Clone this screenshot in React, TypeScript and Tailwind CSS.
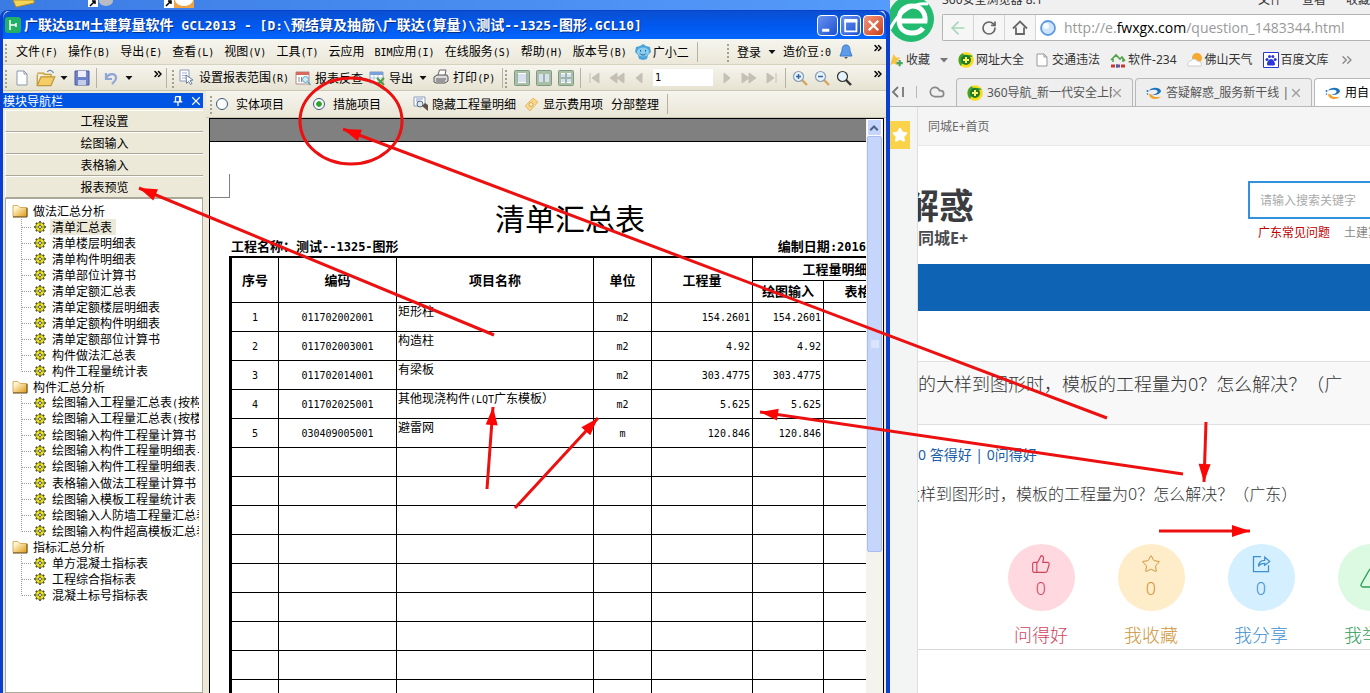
import type { ReactNode } from 'react'
import { ArrowLeft, ChevronsRight, Cloud, House, RotateCw, Star, ThumbsUp, Triangle } from 'lucide-react'

const menus = ['文件(F)', '操作(B)', '导出(E)', '查看(L)', '视图(V)', '工具(T)', '云应用', 'BIM应用(I)', '在线服务(S)', '帮助(H)', '版本号(B)']

const modules = ['工程设置', '绘图输入', '表格输入', '报表预览']

const tree = [
  {
    name: '做法汇总分析',
    items: ['清单汇总表', '清单楼层明细表', '清单构件明细表', '清单部位计算书', '清单定额汇总表', '清单定额楼层明细表', '清单定额构件明细表', '清单定额部位计算书', '构件做法汇总表', '构件工程量统计表'],
  },
  {
    name: '构件汇总分析',
    items: ['绘图输入工程量汇总表(按构', '绘图输入工程量汇总表(按楼', '绘图输入构件工程量计算书', '绘图输入构件工程量明细表-', '绘图输入构件工程量明细表.', '表格输入做法工程量计算书', '绘图输入模板工程量统计表', '绘图输入人防墙工程量汇总表', '绘图输入构件超高模板汇总表'],
  },
  { name: '指标汇总分析', items: ['单方混凝土指标表', '工程综合指标表', '混凝土标号指标表'] },
]

const rows = [
  ['1', '011702002001', '矩形柱', 'm2', '154.2601'],
  ['2', '011702003001', '构造柱', 'm2', '4.92'],
  ['3', '011702014001', '有梁板', 'm2', '303.4775'],
  ['4', '011702025001', '其他现浇构件(LQT广东模板）', 'm2', '5.625'],
  ['5', '030409005001', '避雷网', 'm', '120.846'],
  ...Array.from({ length: 9 }, () => ['', '', '', '', '']),
]

const arrows = [
  [1107, 418, 343, 129],
  [494, 335, 139, 188],
  [515, 508, 598, 418],
  [487, 489, 493, 407],
  [1183, 474, 760, 412],
  [1206, 422, 1204, 482],
  [1159, 531, 1250, 531],
]

// latin runs are set in a half-width mono face next to full-width hanzi
function Song({ text, latin = 'text-[10px]' }: { text: string; latin?: string }) {
  return (
    <>
      {text.split(/([\x20-\x7e]+)/).map((part, i) =>
        i % 2 ? <span key={i} className={`font-['DejaVu_Sans_Mono',monospace] whitespace-pre ${latin}`}>{part}</span> : part,
      )}
    </>
  )
}

function Icon({ children, className = 'size-4' }: { children: ReactNode; className?: string }) {
  return <svg viewBox="0 0 16 16" fill="none" className={`shrink-0 ${className}`}>{children}</svg>
}

function Grip() {
  return (
    <svg className="h-5 w-1 shrink-0" viewBox="0 0 4 20">
      <path d="M2 2v18" stroke="#a5a18f" strokeWidth="2" strokeDasharray="2 2" />
    </svg>
  )
}

function Sep() {
  return <span className="h-5 w-px shrink-0 bg-[#b5b2a0]" />
}

function Caret() {
  return <Icon className="size-2"><path d="M1 4h14l-7 8z" fill="#111" /></Icon>
}

function More() {
  return <ChevronsRight className="size-3 shrink-0" strokeWidth={3} />
}

function Tool({ label, children, gap = 'gap-1' }: { label?: string; children?: ReactNode; gap?: string }) {
  return (
    <button className={`flex shrink-0 items-center ${gap} whitespace-nowrap`}>
      {children}
      {label && <span><Song text={label} /></span>}
    </button>
  )
}

function Lens({ sign }: { sign?: string }) {
  return (
    <Icon>
      <path d="M10 10l5 5" stroke={sign ? '#d9a55a' : '#333'} strokeWidth="2.4" />
      <circle cx="6.5" cy="6.5" r="5" fill="#e6f3fb" stroke={sign ? '#8d9db0' : '#333'} strokeWidth="1.2" />
      {sign && <path d={sign} stroke="#3465a4" strokeWidth="1.5" />}
    </Icon>
  )
}

function Folder() {
  return (
    <Icon>
      <defs>
        <linearGradient id="folder" x1="0" y1="0" x2="1" y2="1">
          <stop offset=".2" stopColor="#fff6cf" />
          <stop offset=".9" stopColor="#e3a32a" />
        </linearGradient>
      </defs>
      <path d="M1 2.500h5l2 2h7v9H1z" fill="url(#folder)" stroke="#c9a04a" strokeWidth=".8" />
      <path d="M15 5v9H1" stroke="#5f4510" />
    </Icon>
  )
}

function Gear() {
  return (
    <Icon className="size-3">
      <path d="M8 0v16M0 8h16M2.500 2.500l11 11M13.500 2.500l-11 11" stroke="#333" strokeWidth="2" />
      <circle cx="8" cy="8" r="6" fill="#f0ea20" stroke="#6d6a14" strokeWidth="1.200" />
      <path d="M8 2v12M2 8h12" stroke="#6d6a14" />
      <circle cx="8" cy="8" r="2" fill="#fff" stroke="#333" />
    </Icon>
  )
}

function Branch({ last }: { last: boolean }) {
  return (
    <svg className="h-4 w-[13px] shrink-0" viewBox="0 0 13 16">
      <path d={last ? 'M.5 0v8.500' : 'M.5 0v16'} stroke="#999" strokeDasharray="1 1" />
      <path d="M1 8.500h10" stroke="#999" strokeDasharray="1 1" />
    </svg>
  )
}

function SwirlIcon() {
  return (
    <Icon>
      <path d="M3 5.500C6 1.500 14 2 15 6c0 2.500-5 4.500-9 4 3-.8 6-2 5.500-3.800C10.500 4.500 7 4.300 3 5.500z" fill="#1c74bd" />
      <path d="M3 9c0 5 8 7 12 2.500-4 1-8 .8-9-2z" fill="#f0a32c" />
      <circle cx="1.500" cy="6" r="1" fill="#1c74bd" />
      <circle cx="1.500" cy="9" r=".8" fill="#1c74bd" />
    </Icon>
  )
}

function Icon360() {
  return (
    <Icon>
      <circle cx="8" cy="8" r="7.800" fill="#f8dc1c" />
      <path d="M3 14C-1 10 0 3 5 1c-1 3 6 1 10 3-3 2-9 1-10 5 0 2-1 3-2 5z" fill="#3da435" />
      <circle cx="8" cy="8" r="5" fill="#237a26" />
      <path d="M8 5v6M5 8h6" stroke="#fff36b" strokeWidth="2" />
    </Icon>
  )
}

function TitleBar() {
  return (
    <header className="flex h-7 shrink-0 items-center gap-[3px] rounded-t-lg bg-linear-to-b from-[#0a4fd0] via-[#0058ee] to-[#0465fd] pl-0.5 pr-0.5 text-white">
      <Icon>
        <rect width="16" height="16" rx="3" fill="#22b066" />
        <path d="M5 3v10M5 8h6M11 6v4" stroke="#fff" strokeWidth="1.500" />
      </Icon>
      <h1 className="flex-1 truncate text-sm font-bold text-shadow-[1px_1px_0_#0a2f80]">
        <Song text="广联达BIM土建算量软件 GCL2013 - [D:\预结算及抽筋\广联达(算量)\测试--1325-图形.GCL10]" latin="text-[13px]" />
      </h1>
      <div className="flex gap-0.5">
        <button aria-label="最小化" className="size-[21px] rounded-sm border border-white bg-linear-to-br from-[#6a93f0] to-[#1c4fd0]">
          <Icon className="size-[19px]"><path d="M3.500 12h6" stroke="#fff" strokeWidth="2.500" /></Icon>
        </button>
        <button aria-label="最大化" className="size-[21px] rounded-sm border border-white bg-linear-to-br from-[#6a93f0] to-[#1c4fd0]">
          <Icon className="size-[19px]"><path d="M3.500 4v9h9.500v-9" stroke="#fff" strokeWidth="1.500" /><path d="M2.800 4h11" stroke="#fff" strokeWidth="3" /></Icon>
        </button>
        <button aria-label="关闭" className="size-[21px] rounded-sm border border-white bg-linear-to-br from-[#f0977c] to-[#cc3a12]">
          <Icon className="size-[19px]"><path d="M4 4l8 8M12 4l-8 8" stroke="#fff" strokeWidth="2" /></Icon>
        </button>
      </div>
    </header>
  )
}

function MenuBar() {
  return (
    <nav className="flex h-[26px] shrink-0 items-center gap-2 border-b border-[#d6d2c0] bg-linear-to-b from-[#f6f5ee] to-[#ebe8d9] pl-px">
      <Grip />
      <div className="flex items-center gap-2.5">
        {menus.map((m) => <Tool key={m} label={m} />)}
      </div>
      <Tool label="广小二" gap="gap-0.5">
        <Icon>
          <path d="M8 0l3 2 4 1 1 5-3 3-1 4-4 1-4-1-1-4-3-3 1-5 4-1z" fill="#4ba3dc" />
          <ellipse cx="8" cy="8" rx="6" ry="4.500" fill="#8ccdf0" />
          <path d="M5 9.500c1.500 2 4.500 2 6 0M5.500 6v1.500M10.500 6v1.500" stroke="#175a90" />
        </Icon>
      </Tool>
      <Sep />
      <div className="ml-auto flex w-40 items-center gap-[7px]">
        <Grip />
        <Tool label="登录" />
        <Caret />
        <Tool label="造价豆:0" />
        <Icon>
          <path d="M8 1c3 0 4 2 4 6l2 5H2l2-5c0-4 1-6 4-6z" fill="#5b9be8" stroke="#3b78c8" />
          <path d="M6 13h4l-2 2z" fill="#555" />
        </Icon>
        <span className="ml-auto mb-2 mr-0.5"><More /></span>
      </div>
    </nav>
  )
}

function ToolBar() {
  return (
    <div className="flex h-[26px] shrink-0 items-center border-b border-[#c9c6b4] bg-linear-to-b from-[#f6f5ee] to-[#e6e3d2]">
      <div className="flex w-[163px] shrink-0 items-center gap-1.5 pl-px">
        <Grip />
        <Tool><Icon><path d="M3 1h7l3 3v11H3z" fill="#fff" stroke="#8a97a8" /><path d="M10 1v3h3" stroke="#8a97a8" /></Icon></Tool>
        <Tool>
          <Icon className="size-5"><path d="M1 4h5l1 1h5v3" fill="#f8e2a0" stroke="#c09a3a" /><path d="M1 14V5l0 9L4 7h11l-3 7z" fill="#f4cd66" stroke="#c09a3a" /><path d="M9 3c2-2 4-1 5 1" stroke="#6a88b0" /></Icon>
          <Caret />
        </Tool>
        <Tool><Icon><path d="M1 1h14v14H1z" fill="#6f83c8" stroke="#4a5ba0" /><path d="M4 1h8v6H4z" fill="#eef" /><path d="M4 10h8v5H4z" fill="#c5cbe8" /></Icon></Tool>
        <Sep />
        <Tool gap="gap-1.5">
          <Icon><path d="M3 3v6h6" stroke="#8fa6d8" strokeWidth="2.200" /><path d="M3 8c3-5 9-5 10-1 .5 3-2 5-4 7" stroke="#8fa6d8" strokeWidth="2.200" /></Icon>
          <Caret />
        </Tool>
        <span className="ml-auto mb-2 mr-0.5"><More /></span>
      </div>
      <div className="flex w-84 shrink-0 items-center gap-1.5">
        <div className="flex items-center gap-1">
          <Sep />
          <Grip />
          <Tool label="设置报表范围(R)" gap="gap-1">
            <Icon><path d="M1 1h9v11H1z" fill="#fff" stroke="#8d99b5" /><path d="M3 4h5M3 6.500h5M3 9h4" stroke="#9fb0d5" /><path d="M7 6l7 5-3 .5 2 3-1.500 1-2-3-2 2z" fill="#fff" stroke="#6a7c9c" /></Icon>
          </Tool>
        </div>
        <Tool label="报表反查">
          <Icon><path d="M1 2h13v12H1z" fill="#fff" stroke="#b08d8d" /><path d="M1 2h13v3H1z" fill="#d66a5c" /><path d="M4 7v5M6.500 7v5" stroke="#888" /><circle cx="10.500" cy="9.500" r="3" fill="#c9ecf5" stroke="#5aa2bb" /><path d="M13 12l2.500 3" stroke="#5aa2bb" strokeWidth="1.500" /></Icon>
        </Tool>
        <Tool label="导出">
          <Icon><path d="M1 2h13v11H1z" fill="#fff" stroke="#8d99b5" /><path d="M1 2h13v3H1z" fill="#7aa0dc" /><path d="M1 8h13M5 5v8M9 5v8" stroke="#b5c4e0" /><path d="M8 8l7 7M15 8l-7 7" stroke="#4f9c3a" strokeWidth="2" /></Icon>
        </Tool>
        <Caret />
        <Tool label="打印(P)">
          <Icon><path d="M5 6l1.500-5H13l-1 5" fill="#fff" stroke="#666" /><path d="M1 8l3-2h10l1 2v4l-3 2H3l-2-1z" fill="#dcdcdc" stroke="#555" /><path d="M3 10h10M3 12h9" stroke="#555" /></Icon>
        </Tool>
      </div>
      <div className="flex min-w-0 flex-1 items-center gap-1.5">
        <div className="flex gap-px"><Sep /><Grip /></div>
        {['M4 3h8v10H4z', 'M3 4h4v8H3zM9 4h4v8H9z', 'M3 3h4v4H3zM9 3h4v4H9zM3 9h4v4H3zM9 9h4v4H9z'].map((d) => (
          <Tool key={d}><Icon><rect x=".5" y=".5" width="15" height="15" rx="1" fill="#a9bfa6" stroke="#7f9a82" /><path d={d} fill="#fff" /><path d="M3 5h10M3 7h10M3 9h10M3 11h10" stroke="#7f9bc4" strokeOpacity=".6" /></Icon></Tool>
        ))}
        <Sep />
        {['M3 3v10M12 3v10L5 8z', 'M8 3v10L1 8zM15 3v10L8 8z', 'M11 3v10L5 8z'].map((d) => (
          <Tool key={d}><Icon><path d={d} fill="#c4c1b4" stroke="#c4c1b4" /></Icon></Tool>
        ))}
        <input aria-label="页码" defaultValue="1" className="h-[17px] w-[60px] bg-white px-0.5 font-['DejaVu_Sans_Mono',monospace] text-[10px]" />
        {['M5 3v10l6-5z', 'M1 3v10l7-5zM8 3v10l7-5z', 'M4 3v10l7-5zM13 3v10'].map((d) => (
          <Tool key={d}><Icon><path d={d} fill="#c4c1b4" stroke="#c4c1b4" /></Icon></Tool>
        ))}
        <Sep />
        <Tool><Lens sign="M6.500 4v5M4 6.500h5" /></Tool>
        <Tool><Lens sign="M4 6.500h5" /></Tool>
        <Tool><Lens /></Tool>
        <span className="ml-auto mb-2 mr-0.5"><More /></span>
      </div>
    </div>
  )
}

function Sidebar() {
  return (
    <aside className="flex w-[200px] shrink-0 flex-col">
      <div className="mt-0.5 flex h-[15px] shrink-0 items-center bg-[#0054e3] pr-0.5 text-white">
        <h2 className="flex-1 leading-[15px]">模块导航栏</h2>
        <button aria-label="固定" className="mr-2"><Icon className="size-2.5"><path d="M4 1h8v8M4 1v8M1 9.500h14M8 10v6M10.500 1v8" stroke="#fff" strokeWidth="2" /></Icon></button>
        <button aria-label="关闭"><Icon className="size-2.5"><path d="M2 2l12 12M14 2L2 14" stroke="#fff" strokeWidth="1.800" /></Icon></button>
      </div>
      <div className="flex min-h-0 flex-1 flex-col pl-0.5 pt-0.5">
        {modules.map((m) => (
          <button key={m} className="h-[22px] shrink-0 border-b border-l border-t border-b-[#aca899] border-l-white border-t-white bg-[#ece9d8]">{m}</button>
        ))}
        <ul className="min-h-0 flex-1 overflow-hidden border border-[#aca899] bg-white pt-1 pr-[3px]">
          {tree.map((group, g) => (
            <li key={group.name}>
              <div className="flex h-4 items-center gap-[5px] pl-1.5"><Folder />{group.name}</div>
              <ul>
                {group.items.map((item, i) => (
                  <li key={item} className="flex h-4 items-center overflow-hidden pl-[15px]">
                    <Branch last={i === group.items.length - 1} />
                    <Gear />
                    <a href="#report" className={`ml-1 whitespace-nowrap px-0.5 leading-4 ${g + i === 0 ? 'bg-[#ece9d8] pr-1' : ''}`}><Song text={item} /></a>
                  </li>
                ))}
              </ul>
            </li>
          ))}
        </ul>
      </div>
    </aside>
  )
}

function ReportOptions() {
  return (
    <div className="flex h-[27px] shrink-0 items-center gap-2 border-b border-[#c9c6b4] bg-linear-to-b from-[#f6f5ee] to-[#e9e6d6] pl-[3px]">
      <div className="flex items-center gap-[3px]">
        <Grip />
        <label className="flex w-[89px] items-center gap-2">
          <input type="radio" name="kind" className="size-3 appearance-none rounded-full border border-[#34587c] bg-white" />
          实体项目
        </label>
      </div>
      <label className="flex w-[92px] items-center gap-2">
        <input type="radio" name="kind" defaultChecked className="size-3 appearance-none rounded-full border border-[#34587c] bg-white bg-radial from-[#2fa52f] from-35% to-white to-45%" />
        措施项目
      </label>
      <Tool label="隐藏工程量明细" gap="gap-[3px]">
        <Icon><path d="M1 1h11v9H1z" fill="#fff" stroke="#8d99b5" /><path d="M3 3h7M3 5h3" stroke="#7f9ccc" /><circle cx="7" cy="8" r="3" fill="#dbe8f4" stroke="#567" /><path d="M9 10l6 5V9l-3-2z" fill="#5d5048" /></Icon>
      </Tool>
      <Tool label="显示费用项" gap="gap-[3px]">
        <Icon><path d="M1 10l8-8 5 4-8 9z" fill="#f5d68c" stroke="#e6bd68" /><circle cx="7" cy="8.500" r="2" fill="#fbeec8" stroke="#d8aa52" /></Icon>
      </Tool>
      <Tool label="分部整理" />
      <Sep />
    </div>
  )
}

function Report() {
  return (
    <main id="report" className="flex min-h-0 flex-1 flex-col overflow-hidden bg-white text-[13px] text-black">
      <div className="h-[23px] shrink-0 border-b border-black bg-[#808080]" />
      <div className="mt-8 h-6 w-5 shrink-0 border-b border-r border-[#808080]" />
      <div className="ml-[19px] flex flex-1 flex-col">
        <h2 className="w-[682px] shrink-0 text-center text-3xl leading-[38px]">清单汇总表</h2>
        <div className="flex h-5 shrink-0 items-center justify-between pl-0.5 font-bold">
          <span><Song text="工程名称：测试--1325-图形" latin="text-[12px]" /></span>
          <span><Song text="编制日期:2016" latin="text-[12px]" /></span>
        </div>
        <table className="w-[687px] table-fixed border-collapse border-l-3 border-t-2 border-black leading-4">
          <colgroup>
            <col className="w-12" />
            <col className="w-[118px]" />
            <col className="w-[197px]" />
            <col className="w-[58px]" />
            <col className="w-[101px]" />
            <col className="w-[71px]" />
            <col className="w-[94px]" />
          </colgroup>
          <thead>
            <tr className="h-[23px]">
              {['序号', '编码', '项目名称', '单位', '工程量'].map((h) => <th key={h} rowSpan={2} className="border border-black p-0">{h}</th>)}
              <th colSpan={2} className="border border-black p-0">工程量明细</th>
            </tr>
            <tr className="h-[22px]">
              <th className="border border-black p-0">绘图输入</th>
              <th className="border border-black p-0">表格输入</th>
            </tr>
          </thead>
          <tbody>
            {rows.map(([no, code, name, unit, qty], i) => (
              <tr key={i} className="h-[29px] text-xs leading-4">
                <td className="border border-black p-0 text-center"><Song text={no} /></td>
                <td className="border border-black p-0 text-center"><Song text={code} /></td>
                <td className="border border-black p-0 pl-px align-top"><Song text={name} /></td>
                <td className="border border-black p-0 text-center"><Song text={unit} /></td>
                <td className="border border-black p-0 pr-0.5 text-right"><Song text={qty} /></td>
                <td className="border border-black p-0 pr-0.5 text-right"><Song text={qty} /></td>
                <td className="border border-black p-0" />
              </tr>
            ))}
          </tbody>
        </table>
      </div>
    </main>
  )
}

function ScrollBar() {
  return (
    <div className="flex w-[18px] shrink-0 flex-col border-r border-black bg-[#f4f3ee] px-px">
      <button aria-label="向上" className="h-[17px] shrink-0 rounded-xs border border-white bg-[#c6d5fc]">
        <Icon className="size-3"><path d="M3 11l5-5 5 5" stroke="#4d6185" strokeWidth="2.600" /></Icon>
      </button>
      <div className="flex h-[416px] shrink-0 items-center justify-center rounded-xs border border-[#a9bdf0] bg-[#c6d5fc]">
        <Icon className="size-2"><path d="M0 2h16M0 6h16M0 10h16M0 14h16" stroke="#eef4fe" strokeWidth="2" /></Icon>
      </div>
    </div>
  )
}

function BudgetWindow() {
  return (
    <div className="flex min-h-0 flex-col bg-linear-to-r from-[#3b7ce4] to-[#559bfb]">
      <div className="flex h-2.5 shrink-0 items-start overflow-hidden pl-3">
        <svg className="h-2 w-6" viewBox="0 0 24 8"><path d="M1 0h21v3L4 7z" fill="#f5d558" stroke="#b58e22" /></svg>
        <svg className="ml-12 h-2 w-8" viewBox="0 0 32 8"><path d="M4 0h10v7H4z" fill="#fff" /><path d="M6 6l5-5M8 1h3v3" stroke="#000" strokeWidth="1.500" fill="none" /><ellipse cx="22" cy="1" rx="7" ry="5" fill="#b9bcc4" /></svg>
        <svg className="ml-11 h-2 w-9" viewBox="0 0 36 8"><path d="M4 0h10v8H4z" fill="#fff" /><path d="M6 6l5-5M8 1h3v3" stroke="#000" strokeWidth="1.500" fill="none" /><path d="M14 0h20v8H14z" fill="#f0a444" /><ellipse cx="24" cy="0" rx="9" ry="6" fill="#fff" /></svg>
      </div>
      <div className="flex min-h-0 flex-1 flex-col rounded-t-lg border-l-3 border-r-4 border-t border-[#0a3fd0] bg-[#ece9d8] font-['Noto_Sans_CJK_SC',sans-serif] text-xs text-black">
        <TitleBar />
        <MenuBar />
        <ToolBar />
        <div className="flex min-h-0 flex-1">
          <Sidebar />
          <section className="ml-[3px] flex min-w-0 flex-1 flex-col">
            <ReportOptions />
            <div className="ml-[3px] mr-0.5 flex min-h-0 flex-1 border-l border-t border-black">
              <Report />
              <ScrollBar />
            </div>
          </section>
        </div>
      </div>
    </div>
  )
}

function Bookmark({ label, children }: { label: string; children: ReactNode }) {
  return <a href="#bookmark" className="flex shrink-0 items-center gap-0.5 whitespace-nowrap">{children}{label}</a>
}

function Tab({ title, children }: { title: string; children: ReactNode }) {
  return (
    <div className="flex w-[177px] shrink-0 items-center rounded-t-sm border border-b-0 border-[#b8b8b8] bg-[#eeeeee] px-2.5 text-[#555]">
      {children}
      <span className="ml-1 flex-1 overflow-hidden whitespace-nowrap">{title}</span>
      <button aria-label="关闭标签"><Icon className="size-2.5"><path d="M2 2l12 12M14 2L2 14" stroke="#999" strokeWidth="2" /></Icon></button>
    </div>
  )
}

function NavButton({ label, children }: { label: string; children: ReactNode }) {
  return (
    <button aria-label={label} className="flex h-full w-[31px] shrink-0 items-center justify-center border-r border-[#d4d4d4] bg-[#f6f6f6]">
      {children}
    </button>
  )
}

function BrowserChrome() {
  return (
    <header className="shrink-0 bg-[#f0f0f0] text-xs text-[#333]">
      <div className="flex h-11">
        <svg className="h-11 w-[52px] shrink-0" viewBox="0 0 52 44">
          <circle cx="21" cy="19" r="23" fill="#22bb70" />
          <path d="M8 21h27c1-9-5-15-13-15S9 12 9 20s5 13 13 13c5 0 9-2 11-5" fill="none" stroke="#fff" strokeWidth="5" />
          <path d="M0 29C8 12 24 2 38 4" fill="none" stroke="#fff" strokeWidth="3" />
        </svg>
        <div className="flex min-w-0 flex-1 flex-col">
          <div className="flex h-1.5 shrink-0 items-end justify-between overflow-hidden leading-3">
            <span>360安全浏览器 8.1</span>
            <span className="flex gap-5"><span>文件</span><span>查看</span><span>收藏</span></span>
          </div>
          <div className="mt-2 flex h-[27px] shrink-0 items-center rounded-l-xs border border-r-0 border-[#b4b4b4] bg-white">
            <NavButton label="后退"><ArrowLeft className="size-5 text-[#a5d8b8]" /></NavButton>
            <NavButton label="刷新"><RotateCw className="size-4 text-[#666]" strokeWidth={2.5} /></NavButton>
            <NavButton label="主页">
              <Icon><path d="M1 8.500L8 1.500l7 7M4 7.500V14h8V7.500" stroke="#666" strokeWidth="1.800" /></Icon>
            </NavButton>
            <Icon className="ml-1 size-4"><circle cx="8" cy="8" r="7" fill="#cfe4fa" stroke="#5f9be0" strokeWidth="1.800" /><circle cx="6" cy="6" r="3" fill="#f4faff" /></Icon>
            <div className="ml-2 whitespace-nowrap font-['Open_Sans',sans-serif] text-sm text-[#999]">http://e.<span className="text-black">fwxgx.com</span>/question_1483344.html</div>
          </div>
        </div>
      </div>
      <nav className="flex h-8 items-center gap-2.5 overflow-hidden">
        <div className="flex items-center gap-2.5">
          <Bookmark label="收藏">
            <Icon className="size-3.5"><path d="M4 1l3 4h5l-4 4 1 5-5-2-4 2z" fill="#f6c548" /><path d="M11 8v7M7.500 11.500h7" stroke="#44a860" strokeWidth="2.500" /></Icon>
          </Bookmark>
          <Icon className="size-2"><path d="M0 4h16l-8 9z" fill="#777" /></Icon>
        </div>
        <Bookmark label="网址大全"><Icon360 /></Bookmark>
        <Bookmark label="交通违法"><Icon><path d="M3 2h7l3 3v9H3zM10 2v3h3" stroke="#999" fill="#fff" /></Icon></Bookmark>
        <Bookmark label="软件-234">
          <Icon><path d="M1 8l5-5 4 4 2-2 3 4M3 7v3M13 7v3" stroke="#4fa545" strokeWidth="1.600" /><path d="M1 14h4M6 14h3M11 14h4" stroke="#d0342c" strokeWidth="3" /><path d="M6 14h4" stroke="#2a65c8" strokeWidth="3" strokeDasharray="2 1" /></Icon>
        </Bookmark>
        <Bookmark label="佛山天气"><Icon><circle cx="10" cy="6" r="5" fill="#f5a932" /><path d="M1 14c-1-3 1-5 3-5 1-3 6-2 6 0 4 0 5 3 4 5z" fill="#fff" stroke="#ccc" /></Icon></Bookmark>
        <Bookmark label="百度文库">
          <Icon><path d="M.5.5h15v15H.5z" fill="#fff" stroke="#2b36d8" /><circle cx="4" cy="7.500" r="1.500" fill="#2b36d8" /><circle cx="6.500" cy="4.500" r="1.500" fill="#2b36d8" /><circle cx="9.800" cy="4.500" r="1.500" fill="#2b36d8" /><circle cx="12.200" cy="7.500" r="1.500" fill="#2b36d8" /><path d="M8 7c2 0 4 3 4 5s-2 1.500-4 1.500S4 14 4 12s2-5 4-5z" fill="#2b36d8" /></Icon>
        </Bookmark>
        <ChevronsRight className="size-4 shrink-0 text-[#888]" />
      </nav>
      <div className="mt-0.5 flex h-[29px] items-stretch gap-0.5 overflow-hidden border-b border-[#b8b8b8]">
        <div className="flex w-16 shrink-0 items-center">
          <Icon className="mr-2.5 size-4"><path d="M8 3L3 8l5 5M13 3v10" stroke="#777" strokeWidth="1.800" /></Icon>
          <span className="h-3 w-px bg-[#b8b8b8]" />
          <Cloud className="ml-3 size-4 text-[#888]" strokeWidth={2.5} />
        </div>
        <Tab title="360导航_新一代安全上网"><Icon360 /></Tab>
        <Tab title="答疑解惑_服务新干线 || 广联达"><SwirlIcon /></Tab>
        <div className="flex flex-1 items-center gap-1 overflow-hidden whitespace-nowrap rounded-tl-sm border-l border-t border-[#b8b8b8] bg-white pl-2.5 text-black"><SwirlIcon />用自</div>
      </div>
    </header>
  )
}

function Action({ label, className, circle, children }: { label: string; className: string; circle: string; children: ReactNode }) {
  return (
    <button className={`flex w-[110px] shrink-0 flex-col items-center text-lg ${className}`}>
      <span className={`flex size-[67px] flex-col items-center justify-center rounded-full ${circle}`}>{children}</span>
      <span className="mt-2.5 leading-7">{label}</span>
    </button>
  )
}

function Site() {
  return (
    <div className="flex min-h-0 flex-1">
      <div className="w-7 shrink-0 border-r border-[#dddddd] bg-[#f3f5f5] pt-3.5">
        <div className="flex h-7 w-5 items-center justify-center bg-[#fbd34a]"><Star className="size-4 fill-white text-white" /></div>
      </div>
      <div className="min-w-0 flex-1 overflow-hidden whitespace-nowrap bg-white text-[#333]">
        <div className="h-[39px] border-b border-[#e8e8e8] bg-[#f5f5f5] pl-2.5 text-xs leading-10 text-[#666]">同城E+首页</div>
        <div className="flex h-[118px] justify-between">
          <div className="pt-9 font-bold text-[#3b3c40]">
            <div className="-ml-3.5 text-[35px] leading-[48px]">解惑</div>
            <div className="text-base leading-4 text-[#4a4b4e]">同城E+</div>
          </div>
          <div className="w-[122px] pt-[35px]">
            <input aria-label="搜索" placeholder="请输入搜索关键字" className="h-[38px] w-full border-2 border-r-0 border-[#3390dc] pl-2.5 text-xs placeholder:text-[#aaa]" />
            <div className="flex gap-3.5 pl-2.5 pt-1 text-xs leading-5">
              <a href="#faq" className="text-[#c00000]">广东常见问题</a>
              <a href="#civil" className="text-[#888]">土建算量</a>
            </div>
          </div>
        </div>
        <div className="h-[47px] bg-[#0e63b4]" />
        <div className="mt-[50px] h-16 border-y border-[#e0e0e0] bg-[#f8f8f8] text-lg font-light leading-[45px]">的大样到图形时，模板的工程量为0？怎么解决？（广</div>
        <div className="pt-5 text-sm leading-5 text-[#1a5fa8]">0 答得好 | 0问得好</div>
        <p className="-ml-3.5 pt-[17px] text-base font-light leading-6">大样到图形时，模板的工程量为0？怎么解决？（广东）</p>
        <div className="mt-[38px] flex border-b border-[#d8d8d8] pl-[68px] font-light">
          <Action label="问得好" className="text-[#cf4560]" circle="bg-[#ffd9df]"><ThumbsUp className="size-5" strokeWidth={1.4} /><span className="leading-7">0</span></Action>
          <Action label="我收藏" className="text-[#cf963a]" circle="bg-[#ffecc8]"><Star className="size-5" strokeWidth={1.2} /><span className="leading-7">0</span></Action>
          <Action label="我分享" className="text-[#3f8fcf]" circle="bg-[#d4efff]">
            <Icon className="size-5"><path d="M8 2H2v12h12V9" stroke="currentColor" /><path d="M6 10c0-4 2-5 5-5V2.500L15 6l-4 3V7.500c-2 0-4 .5-5 2.500z" stroke="currentColor" /></Icon>
            <span className="leading-7">0</span>
          </Action>
          <Action label="我举报" className="text-[#2f9e57]" circle="bg-[#dcf9e2]"><Triangle className="size-6" strokeWidth={1.4} /></Action>
        </div>
      </div>
    </div>
  )
}

function Annotations() {
  return (
    <svg className="pointer-events-none absolute left-0 top-0 h-full w-full" fill="none" stroke="#ec1010" strokeWidth="3">
      <defs>
        <marker id="head" markerUnits="userSpaceOnUse" markerWidth="20" markerHeight="14" refX="19" refY="7" orient="auto">
          <path d="M1 1l18 6-18 6z" fill="#fb0505" stroke="none" />
        </marker>
      </defs>
      <ellipse cx="351" cy="121" rx="51" ry="43" />
      {arrows.map(([x1, y1, x2, y2]) => (
        <line key={`${x1}-${y1}`} x1={x1} y1={y1} x2={x2} y2={y2} markerEnd="url(#head)" />
      ))}
    </svg>
  )
}

export default function App() {
  return (
    <div className="relative grid h-screen grid-cols-[minmax(0,1fr)_480px] overflow-hidden bg-[#f0f0f0]">
      <BudgetWindow />
      <div className="flex min-h-0 flex-col overflow-hidden font-['Noto_Sans','Noto_Sans_CJK_SC',sans-serif]">
        <BrowserChrome />
        <Site />
      </div>
      <Annotations />
    </div>
  )
}
